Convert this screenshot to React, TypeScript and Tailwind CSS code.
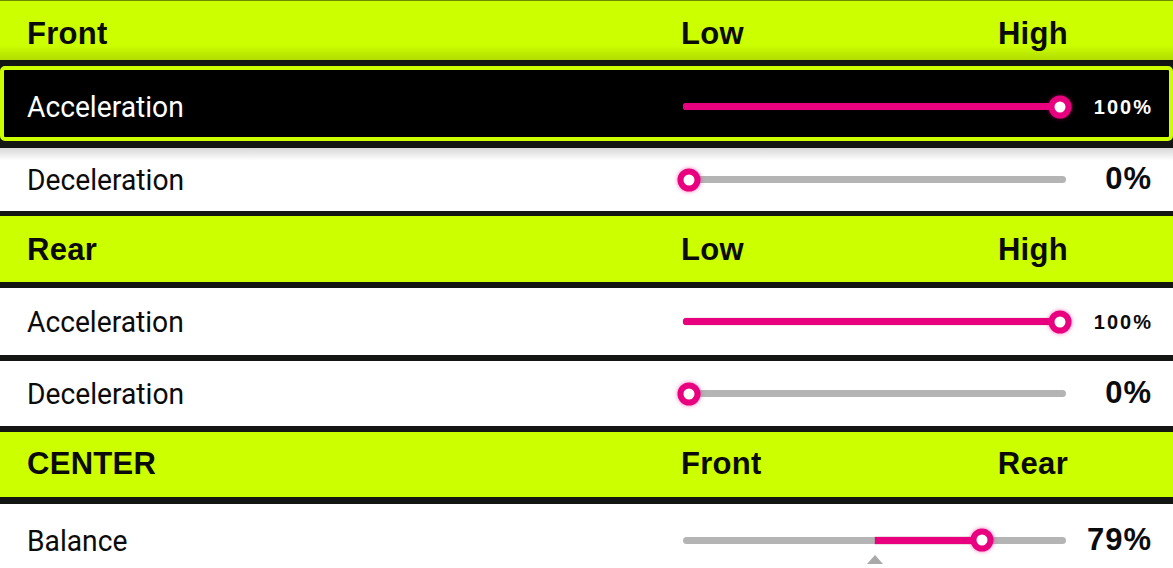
import type { ReactNode } from "react";

type SliderProps = {
  value: number;
  centered?: boolean;
};

const LIME = "bg-[#ccff00]";

function Thumb({ left }: { left: number }) {
  return (
    <span
      className="absolute top-1/2 h-[23px] w-[23px] -translate-x-1/2 -translate-y-1/2 rounded-full border-[6px] border-[#e8007f] bg-white shadow-[0_0_4px_rgba(232,0,127,0.55)]"
      style={{ left: `${left}px` }}
    />
  );
}

// Track runs 383px; the thumb travels between 6px and 377px.
function Slider({ value, centered }: SliderProps) {
  const min = 6;
  const max = 377;
  const pos = min + ((max - min) * value) / 100;
  const mid = 383 / 2;
  const fillLeft = centered ? Math.min(mid, pos) : 0;
  const fillWidth = centered ? Math.abs(pos - mid) : pos;

  return (
    <div className="relative h-[7px] w-[383px] shrink-0">
      <div className="absolute inset-0 rounded-full bg-[#b4b4b4]" />
      {fillWidth > 0 && (
        <div
          className={`absolute top-0 h-[7px] bg-[#e8007f] shadow-[0_0_1px_rgba(120,0,60,0.8)] ${centered ? "" : "rounded-l-full"}`}
          style={{ left: `${fillLeft}px`, width: `${fillWidth}px` }}
        />
      )}
      {centered && (
        <span className="absolute left-1/2 top-[18px] h-0 w-0 -translate-x-1/2 border-x-[8px] border-b-[9px] border-x-transparent border-b-[#a9a9a9]" />
      )}
      <Thumb left={pos} />
    </div>
  );
}

function Header({ title, low, high, className = "" }: { title: string; low: string; high: string; className?: string }) {
  return (
    <div className={`flex items-center pl-[27px] font-['Liberation_Sans',Arial,sans-serif] text-[31px] font-bold tracking-[0.3px] text-[#0b0b0b] ${LIME} ${className}`}>
      <div className="flex-1">{title}</div>
      <div className="-ml-[2px] flex w-[387px] shrink-0 justify-between">
        <span>{low}</span>
        <span>{high}</span>
      </div>
      <div className="w-[105px] shrink-0" />
    </div>
  );
}

function Value({ children, small, dark }: { children: ReactNode; small?: boolean; dark?: boolean }) {
  return (
    <div
      className={`w-[85px] shrink-0 text-right font-['Liberation_Sans',Arial,sans-serif] font-bold ${
        dark ? "text-white" : "text-[#0b0b0b]"
      }`}
    >
      <span className={small ? "relative left-[2px] text-[20px] tracking-[2px]" : "relative left-[1px] text-[31px] tracking-[1px]"}>
        {children}
      </span>
    </div>
  );
}

function Row({
  label,
  value,
  centered,
  selected,
  className = "",
}: {
  label: string;
  value: number;
  centered?: boolean;
  selected?: boolean;
  className?: string;
}) {
  const text = `${value}%`;
  return (
    <div
      className={`flex items-center ${
        selected
          ? "rounded-[5px] border-[4px] border-[#ccff00] bg-black pl-[23px] pr-[18px] text-white"
          : "bg-white pl-[27px] pr-[22px] text-[#0b0b0b]"
      } ${className}`}
    >
      <div className="flex-1">
        <span className="inline-block origin-left scale-x-[0.94] font-['Roboto',sans-serif] text-[30px]">{label}</span>
      </div>
      <Slider value={value} centered={centered} />
      <Value small={value === 100} dark={selected}>
        {text}
      </Value>
    </div>
  );
}

export default function App() {
  return (
    <div className="flex h-[568px] w-[1173px] flex-col overflow-hidden bg-[#141614]">
      <Header
        title="Front"
        low="Low"
        high="High"
        className="h-[60px] border-t border-[#6d8a00] bg-gradient-to-b from-[#ccff00] from-75% to-[#b2dc00] pt-[8px]"
      />
      <Row label="Acceleration" value={100} selected className="mt-[6px] h-[75px] pt-[6px]" />
      <Row
        label="Deceleration"
        value={0}
        className="mt-[7px] h-[63px] bg-gradient-to-b from-[#d8d8d8] via-white via-20% to-white"
      />
      <Header title="Rear" low="Low" high="High" className="mt-[5px] h-[66px] pt-[2px]" />
      <Row label="Acceleration" value={100} className="mt-[6px] h-[67px]" />
      <Row label="Deceleration" value={0} className="mt-[6px] h-[65px]" />
      <Header title="CENTER" low="Front" high="Rear" className="mt-[6px] h-[65px]" />
      <Row label="Balance" value={79} centered className="mt-[7px] h-[64px] shrink-0 pt-[8px]" />
    </div>
  );
}
